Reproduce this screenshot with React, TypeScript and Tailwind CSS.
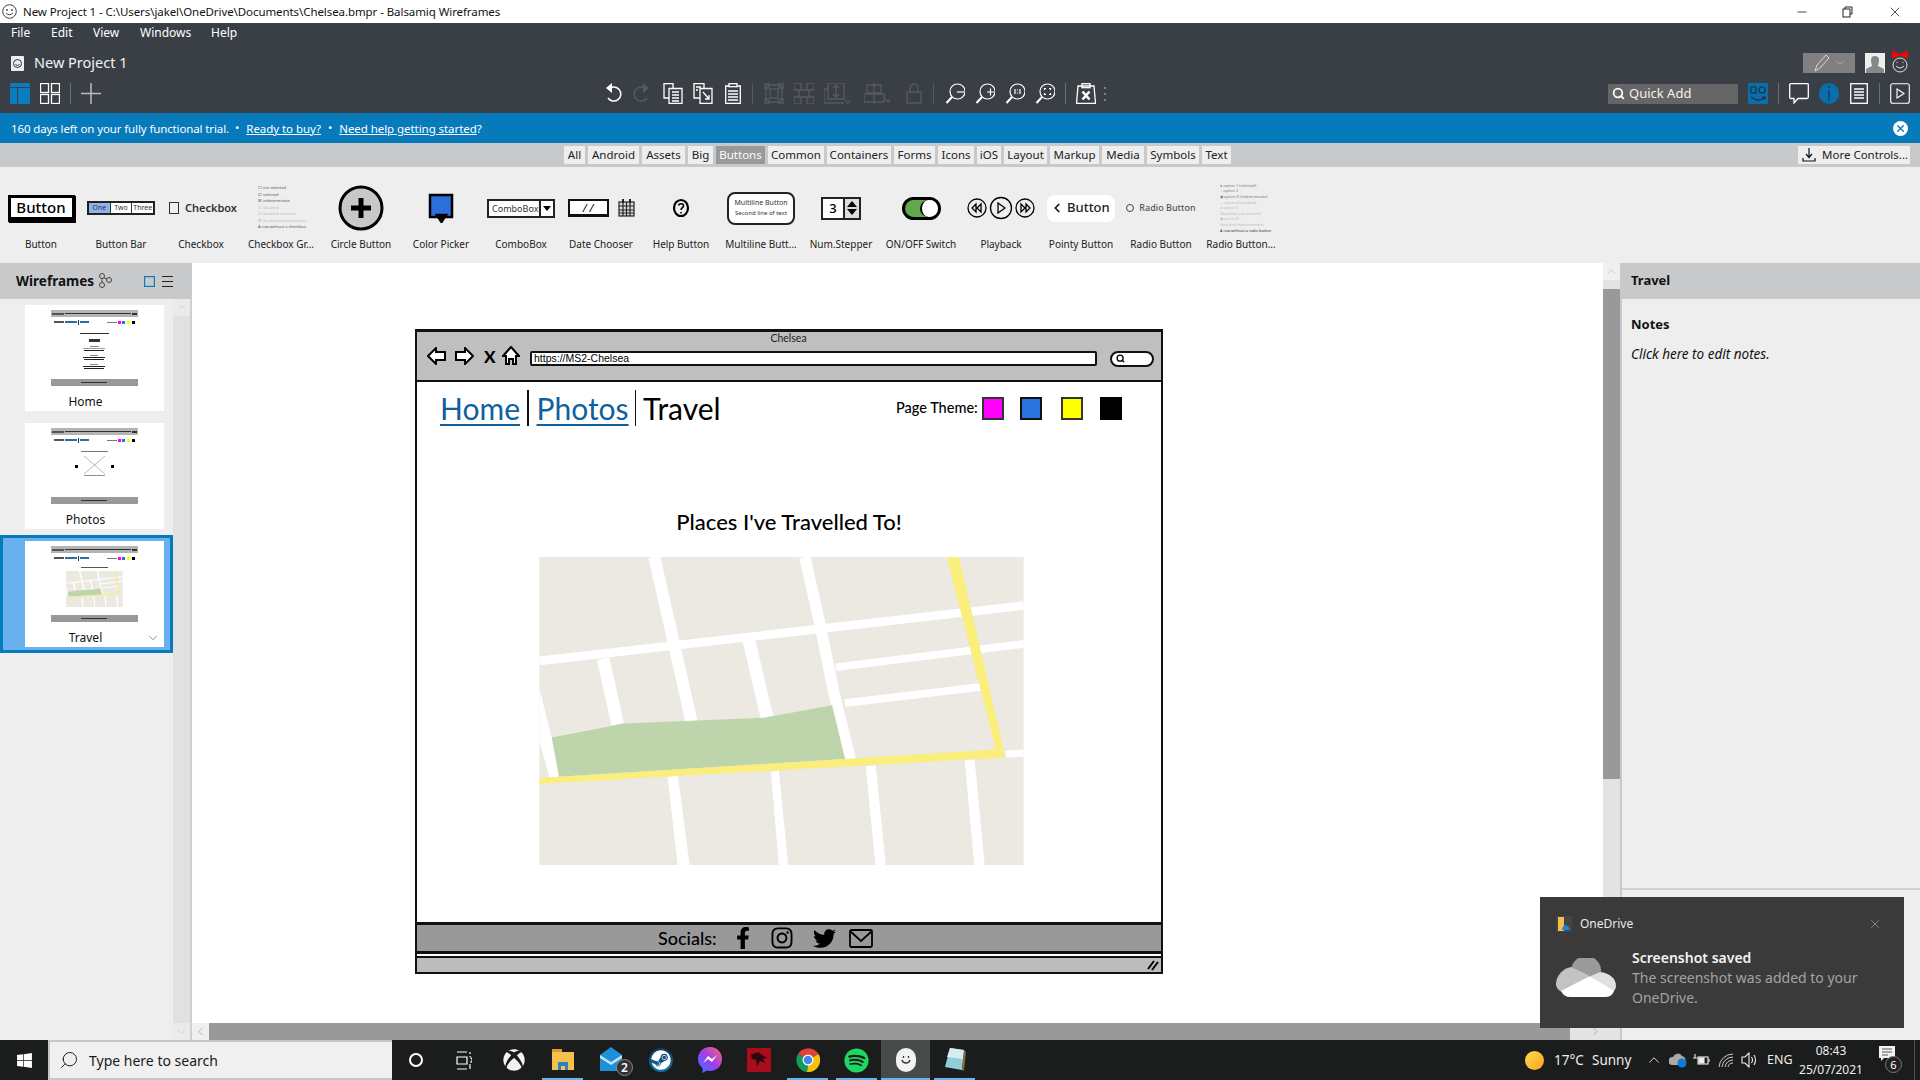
import React from "react";
import { FaWindows, FaXbox, FaSteam, FaSpotify, FaTwitter, FaFacebookF, FaInstagram } from "react-icons/fa";
import { Search, ChevronUp, ChevronDown, ChevronLeft, ChevronRight, X, Minus } from "lucide-react";

const ui = "font-['Noto_Sans','Open_Sans',sans-serif]";
const sk = "font-['Lato','Liberation_Sans',sans-serif]";

function S({ w, h = 21, sw = 1.3, c = "#fff", cls = "", children }: { w: number; h?: number; sw?: number; c?: string; cls?: string; children: React.ReactNode }) {
  return (
    <svg width={w} height={h} viewBox={`0 0 ${w} ${h}`} fill="none" stroke={c} strokeWidth={sw} className={"shrink-0 block " + cls}>
      {children}
    </svg>
  );
}

function MapSvg({ w, h }: { w: number; h: number }) {
  return (
    <svg width={w} height={h} viewBox="58 50 1454 925" className="block">
      <rect x="58" y="50" width="1454" height="925" fill="#ebe9e1" />
      <g stroke="#fff" fill="none">
        <path d="M403 50L515 545" strokeWidth="36" />
        <path d="M855 50L900 250L945 470L992 660" strokeWidth="34" />
        <path d="M58 362L1512 196" strokeWidth="26" />
        <path d="M948 381L1512 311" strokeWidth="23" />
        <path d="M975 489L1400 438" strokeWidth="23" />
        <path d="M249 355L293 552" strokeWidth="38" />
        <path d="M687 300L741 530" strokeWidth="38" />
      </g>
      <g fill="#fff">
        <path d="M58 445L95 592L117 712L88 712L58 605Z" />
        <path d="M443 710L474 708L509 975L473 975Z" />
        <path d="M753 695L777 692L805 975L777 975Z" />
        <path d="M1038 678L1068 676L1098 975L1067 975Z" />
        <path d="M1335 660L1365 658L1395 975L1364 975Z" />
        <path d="M1458 632L1512 628L1512 650L1458 652Z" />
      </g>
      <path d="M95 592L313 550L733 533L937 495L976 657L117 710Z" fill="#bed5ac" />
      <path d="M1282 50L1318 50L1458 652L58 731L58 714L1428 628Z" fill="#faee7c" />
    </svg>
  );
}

function Mini({ kind }: { kind: "home" | "photos" | "travel" }) {
  return (
    <div className="w-[87px] h-[76px] flex flex-col">
      <div className="h-[7px] bg-[#b4b4b4] flex items-center px-[1px] gap-[1px]">
        <div className="w-[12px] h-[2px] bg-[#555]" />
        <div className="flex-1 h-[1px] bg-[#333]" />
        <div className="w-[5px] h-[2px] bg-[#333]" />
      </div>
      <div className="h-[8px] flex items-center mt-[1px] px-[3px]">
        <div className="w-[10px] h-[2px] bg-[#555]" />
        <div className="w-[12px] h-[2px] bg-[#2a6ea8] ml-[1px]" />
        <div className="w-[1px] h-[5px] bg-[#333] ml-[1px]" />
        <div className="w-[9px] h-[2px] bg-[#2a6ea8] ml-[1px]" />
        <div className="w-[10px] h-[1px] bg-[#777] ml-[18px]" />
        <div className="w-[3px] h-[3px] bg-[#f0f] ml-[1px]" />
        <div className="w-[3px] h-[3px] bg-[#2a6fdb] ml-[1px]" />
        <div className="w-[3px] h-[3px] bg-[#ff0] ml-[2px]" />
        <div className="w-[3px] h-[3px] bg-black ml-[2px]" />
      </div>
      <div className="flex-1 flex flex-col items-center min-h-0">
        {kind === "home" && (
          <>
            <div className="w-[29px] h-[1px] bg-[#333] mt-[7px]" />
            <div className="w-[11px] h-[3px] bg-[#333] mt-[5px]" />
            <div className="w-[9px] h-[1px] bg-[#888] mt-[4px]" />
            <div className="w-[22px] h-[1px] bg-[#999] mt-[1px]" />
            <div className="w-[20px] h-[1px] bg-[#222] mt-[1px]" />
            <div className="w-[8px] h-[1px] bg-[#888] mt-[4px]" />
            <div className="w-[22px] h-[1px] bg-[#222] mt-[1px]" />
            <div className="w-[20px] h-[1px] bg-[#222] mt-[1px]" />
            <div className="w-[8px] h-[1px] bg-[#888] mt-[4px]" />
            <div className="w-[22px] h-[1px] bg-[#222] mt-[1px]" />
            <div className="w-[20px] h-[1px] bg-[#222] mt-[1px]" />
          </>
        )}
        {kind === "photos" && (
          <>
            <div className="w-[27px] h-[1px] bg-[#777] mt-[7px]" />
            <div className="flex items-center gap-[3px] mt-[4px] h-[20px]">
              <div className="w-[3px] h-[3px] bg-black" />
              <svg width="21" height="20" viewBox="0 0 21 20" stroke="#888" strokeWidth="0.6" className="block mx-[3px]">
                <path d="M0 0L21 18M21 0L0 18" />
                <path d="M0 19.5H21" stroke="#444" />
              </svg>
              <div className="w-[3px] h-[3px] bg-black" />
            </div>
          </>
        )}
        {kind === "travel" && (
          <>
            <div className="w-[27px] h-[1px] bg-[#555] mt-[5px]" />
            <div className="mt-[3px]">
              <MapSvg w={57} h={36} />
            </div>
          </>
        )}
      </div>
      <div className="h-[7px] bg-[#999] flex items-center justify-center">
        <div className="w-[26px] h-[1px] bg-[#333]" />
      </div>
    </div>
  );
}

function ThumbCard({ kind, label, selected }: { kind: "home" | "photos" | "travel"; label: string; selected?: boolean }) {
  const card = (
    <div className="w-[139px] h-[106px] bg-white flex flex-col items-center relative">
      <div className="mt-[5px] ml-[-1px]"><Mini kind={kind} /></div>
      <div className="text-[12px] text-[#111] leading-[16px] mt-[8px] mr-[18px]">{label}</div>
      {selected && <ChevronDown size={14} strokeWidth={1} color="#444" className="absolute right-[4px] bottom-[2px]" />}
    </div>
  );
  if (selected) {
    return (
      <div className="w-[173px] h-[118px] border-[3px] border-[#067abb] bg-[#68b0ee] pl-[22px] pt-[3px]">
        {card}
      </div>
    );
  }
  return <div className="pl-[25px] mb-[12px]">{card}</div>;
}

function Library() {
  const items: [string, React.ReactNode][] = [
    ["Button", <div className="w-[67px] h-[27px] bg-white border-[3px] border-black border-b-[5px] shadow-[1px_1px_0_#000] flex items-center justify-center text-[15px] font-medium text-black" key="a">Button</div>],
    ["Button Bar", <div className="w-[68px] h-[14px] border-2 border-[#222] flex text-[7px] text-[#333] leading-[10px] text-center" key="a"><div className="flex-1 bg-[#8db3ee]">One</div><div className="flex-1 bg-white border-l border-[#333]">Two</div><div className="flex-1 bg-white border-l border-[#333]">Three</div></div>],
    ["Checkbox", <div className="flex items-center gap-[6px] ml-[4px]" key="a"><div className="w-[10px] h-[12px] border border-[#333]" /><span className="text-[11px] text-[#333] font-semibold">Checkbox</span></div>],
    ["Checkbox Gr...", <div className="flex flex-col text-[4px] leading-[6.6px] text-[#555] w-[54px] whitespace-nowrap ml-[8px]" key="a">
      <span>☐ not selected</span><span>☑ selected</span><span>☒ indeterminate</span><span className="text-[#bbb]">☐ disabled</span><span className="text-[#bbb]">☑ disabled selected</span><span className="text-[#bbb]">☒ disabled indeterminate</span><span>A row without a checkbox</span></div>],
    ["Circle Button", <S key="a" w={46} h={46} c="#000" sw={3}><circle cx="23" cy="23" r="21" fill="#c8c8c8" /><path d="M23 13V33M13 23H33" strokeWidth="5" /></S>],
    ["Color Picker", <S key="a" w={26} h={30} c="#000" sw={2.5}><rect x="2" y="2" width="22" height="22" fill="#2a6fdb" /><path d="M9 22H18L13.5 29Z" fill="#000" /></S>],
    ["ComboBox", <div key="a" className="w-[68px] h-[19px] border-2 border-[#222] bg-white flex items-center text-[9px] text-[#333] leading-none"><div className="flex-1 pl-[3px] border-r-2 border-[#222] h-full flex items-center">ComboBox</div><div className="w-[12px] flex justify-center"><div className="w-0 h-0 border-x-[4px] border-x-transparent border-t-[5px] border-t-black" /></div></div>],
    ["Date Chooser", <div key="a" className="flex items-center gap-[9px]"><div className="w-[41px] h-[18px] border-2 border-b-[3px] border-[#111] bg-white text-[11px] flex items-center justify-center text-black italic leading-none">/ /</div><S w={17} h={18} c="#222" sw={1.2}><rect x="1" y="3" width="15" height="14" fill="#ddd" /><path d="M1 7H16M1 11H16M1 14H16M5 3V17M8.500 3V17M12 3V17" /><path d="M5 0V4M12 0V4" strokeWidth="2" /></S></div>],
    ["Help Button", <S key="a" w={18} h={20} c="#000" sw={2.2}><ellipse cx="9" cy="10" rx="7" ry="8" /><path d="M6.500 7.500C7 5 12 5 11.500 8C11 10 9 10 9 12M9 14V15.500" strokeWidth="1.600" /></S>],
    ["Multiline Butt...", <div key="a" className="w-[68px] h-[33px] border-2 border-[#222] rounded-[8px] bg-white flex flex-col items-center justify-center text-[7px] leading-[11px] text-[#333]"><span>Multiline Button</span><span className="text-[6px]">Second line of text</span></div>],
    ["Num.Stepper", <div key="a" className="w-[40px] h-[23px] border-2 border-[#222] bg-white flex items-center text-[13px] text-black font-medium"><div className="flex-1 text-center leading-none">3</div><div className="w-[16px] h-full bg-[#ddd] border-l-2 border-[#222] flex flex-col items-center justify-center gap-[2px]"><div className="w-0 h-0 border-x-[5px] border-x-transparent border-b-[6px] border-b-black" /><div className="w-0 h-0 border-x-[5px] border-x-transparent border-t-[6px] border-t-black" /></div></div>],
    ["ON/OFF Switch", <div key="a" className="w-[39px] h-[23px] rounded-full border-[3px] border-black bg-[#62a84e] flex justify-end"><div className="w-[18px] h-full rounded-full bg-white border-l-2 border-black" /></div>],
    ["Playback", <S key="a" w={68} h={26} c="#000" sw={1.300}><circle cx="10" cy="13" r="9" /><circle cx="34" cy="13" r="10.500" /><circle cx="58" cy="13" r="9" /><path d="M9 9L5 13L9 17ZM14 9L10 13L14 17Z" /><path d="M31 8L38 13L31 18Z" /><path d="M54 9L58 13L54 17ZM59 9L63 13L59 17Z" /></S>],
    ["Pointy Button", <div key="a" className="w-[68px] h-[27px] rounded-[8px] bg-white flex items-center text-[13px] text-[#222] font-medium pl-[3px]"><ChevronLeft size={14} strokeWidth={3} color="#111" /><span className="ml-[3px]">Button</span></div>],
    ["Radio Button", <div key="a" className="flex items-center gap-[5px] text-[9px] font-medium text-[#555] whitespace-nowrap"><div className="w-[8px] h-[8px] rounded-full border border-[#444]" /><span>Radio Button</span></div>],
    ["Radio Button...", <div key="a" className="flex flex-col text-[3.8px] leading-[5.6px] text-[#777] w-[54px] whitespace-nowrap ml-[12px]"><span>● option 1 (selected)</span><span>○ option 2</span><span>◉ option 3 (indeterminate)</span><span className="text-[#bbb]">○ option 4 (disabled)</span><span className="text-[#bbb]">● option 5</span><span className="text-[#bbb]">(disabled and selected)</span><span className="text-[#bbb]">◉ option 6</span><span className="text-[#bbb]">(disabled indeterminate)</span><span className="text-[#333]">A row without a radio button</span></div>],
  ];
  return (
    <div className="h-[96px] bg-[#eeeeee] flex pl-[1px] shrink-0">
      {items.map(([label, node]) => (
        <div key={label} className="w-[80px] flex flex-col items-center shrink-0">
          <div className="h-[48px] mt-[17px] flex items-center justify-center w-full overflow-visible">{node}</div>
          <div className="mt-[5px] text-[10px] leading-[14px] text-[#222] whitespace-nowrap">{label}</div>
        </div>
      ))}
    </div>
  );
}

const tabs: [string, number][] = [["All", 21], ["Android", 51], ["Assets", 43], ["Big", 25], ["Buttons", 49], ["Common", 56], ["Containers", 64], ["Forms", 41], ["Icons", 36], ["iOS", 24], ["Layout", 43], ["Markup", 49], ["Media", 42], ["Symbols", 52], ["Text", 29]];

function Toolbar() {
  const dim = "#565b61";
  return (
    <div className="h-[21px] mt-[10px] flex items-center pl-[10px]">
      <S w={20} c="#0a7cc0" sw={0}><rect x="0" y="0" width="20" height="4" fill="#0a7cc0" /><rect x="0" y="5" width="7" height="16" fill="#0a7cc0" /><rect x="8" y="5" width="12" height="16" fill="#0a7cc0" /></S>
      <S w={20} cls="ml-[10px]"><rect x=".5" y=".5" width="8" height="9" /><rect x="11.500" y=".5" width="8" height="9" /><rect x=".5" y="11.500" width="8" height="9" /><rect x="11.500" y="11.500" width="8" height="9" /></S>
      <div className="w-px h-[21px] bg-[#6a6f75] ml-[10px]" />
      <S w={20} c="#b9bcc0" sw={1.500} cls="ml-[10px]"><path d="M10 0V21M0 10.500H20" /></S>
      <S w={18} sw={1.500} cls="ml-[503px]"><path d="M5 6A7 7 0 1 1 4 15" /><path d="M8 0V10L2 5Z" fill="#fff" stroke="none" /></S>
      <S w={18} c={dim} sw={1.500} cls="ml-[11px]"><path d="M13 6A7 7 0 1 0 14 15" /><path d="M10 0V10L16 5Z" fill={dim} stroke="none" /></S>
      <S w={20} cls="ml-[12px]"><path d="M1 .5H10V15H1Z" /><path d="M6 5.500H19V20.500H6Z" fill="#3a3f45" /><path d="M9 9H16M9 12H16M9 15H16M9 18H16" /></S>
      <S w={20} cls="ml-[10px]"><path d="M1 .5H11V15H1Z" /><path d="M7 5.500H19V20.500H7Z" fill="#3a3f45" /><path d="M10 9L16 16M16 12V16H12M3 4H8M3 7H5" /></S>
      <S w={16} cls="ml-[12px]"><path d="M.7 3H15.300V20.500H.7Z" /><rect x="4" y=".7" width="8" height="3" fill="#3a3f45" /><path d="M3 8H13M3 11H13M3 14H13M3 17H13" /></S>
      <div className="w-px h-[21px] bg-[#55595f] ml-[11px]" />
      <S w={20} c={dim} cls="ml-[11px]"><path d="M2 2H18V19H2Z M0 0H5V5H0ZM15 0H20V5H15ZM0 16H5V21H0ZM15 16H20V21H15ZM6 6H14V15H6Z" /></S>
      <S w={20} c={dim} cls="ml-[10px]"><path d="M0 0H7V7H0ZM13 0H20V7H13ZM0 14H7V21H0ZM13 14H20V21H13ZM5 7H15V14H5Z" /></S>
      <S w={26} c={dim} cls="ml-[10px]"><path d="M0 6H4M0 6V20H20M4 0H20V16H4ZM12 3V13M9 5L12 2L15 5M9 11L12 14L15 11M21 17L24 20L26 17" /></S>
      <S w={26} c={dim} cls="ml-[14px]"><path d="M3 2H17V10H3ZM0 11H20V19H0ZM10 0V21M21 16L24 19L26 16" /></S>
      <S w={16} c={dim} cls="ml-[16px]"><path d="M1 9H15V20H1ZM4 9V5A4 4 0 0 1 12 5V9" /></S>
      <div className="w-px h-[21px] bg-[#55595f] ml-[11px]" />
      {["M12 9H19", "M12 9H19M15.500 5.500V12.500", "", ""].map((d, i) => (
        <S key={i} w={20} cls={i === 0 ? "ml-[11px]" : "ml-[10px]"} sw={1.200}>
          <circle cx="12.500" cy="8.500" r="7.500" />
          <path d="M7 14L1.500 20" strokeWidth="2" />
          {d && <path d={d} />}
          {i === 2 && <path d="M10 6V11M15 6V11M12.500 6.500V7.500M12.500 9.500V10.500" />}
          {i === 3 && <path d="M9.500 7V5.500H11M15.500 7V5.500H14M9.500 10V11.500H11M15.500 10V11.500H14" />}
        </S>
      ))}
      <div className="w-px h-[21px] bg-[#6a6f75] ml-[10px]" />
      <S w={20} cls="ml-[10px]"><path d="M2 3H18L19.500 20.500H.5Z" /><rect x="6" y=".7" width="8" height="4" /><path d="M6.500 8.500L13.500 16.500M13.500 8.500L6.500 16.500" strokeWidth="2.600" /></S>
      <div className="flex flex-col gap-[4px] ml-[8px]"><div className="w-[2px] h-[2px] bg-[#7d8187]" /><div className="w-[2px] h-[2px] bg-[#7d8187]" /><div className="w-[2px] h-[2px] bg-[#7d8187]" /></div>
      <div className="ml-[502px] w-[130px] h-[20px] bg-[#666666] flex items-center pl-[4px] text-[#f2f2f2] text-[13px]">
        <Search size={13} strokeWidth={3.2} color="#fff" />
        <span className="ml-[4px]">Quick Add</span>
      </div>
      <div className="ml-[10px] w-[20px] h-[21px] bg-[#0a6eaa]">
        <S w={20} c="#1d2e3d" sw={1.100}><rect x="3" y="4" width="5" height="6" /><circle cx="14" cy="7" r="3" /><path d="M3 14C8 18 13 18 17 14M14 14H17V17" /></S>
      </div>
      <div className="w-px h-[21px] bg-[#6a6f75] ml-[10px]" />
      <S w={20} cls="ml-[10px]"><path d="M1.500 .7H18.500Q19.300 .7 19.300 1.500V14Q19.300 15.500 18 15.500H9L5 20V15.500H2Q.7 15.500 .7 14V1.500Z" /></S>
      <div className="ml-[10px] w-[20px] h-[21px] rounded-full bg-[#0a6eaa] flex items-center justify-center">
        <S w={4} h={15} c="#14334c" sw={1.200}><path d="M2 0V2M2 4.500V15" /></S>
      </div>
      <S w={18} cls="ml-[11px]" sw={1.300}><rect x=".7" y=".7" width="16.600" height="19.600" /><path d="M4 6H14M4 9H14M4 12H14M4 15H14" /></S>
      <div className="w-px h-[21px] bg-[#6a6f75] ml-[11px]" />
      <S w={20} cls="ml-[10px]" sw={1.100}><rect x=".7" y=".7" width="18.600" height="19.600" rx="2" /><path d="M7 6L14 10.500L7 15Z" /></S>
    </div>
  );
}

function Wireframe() {
  const Swatch = ({ cls }: { cls: string }) => <div className={"w-[22px] h-[23px] border-2 " + cls} />;
  return (
    <div className={"ml-[223px] mt-[66px] w-[748px] h-[645px] border-2 border-t-[3px] border-[#111] bg-white flex flex-col " + sk}>
      <div className="h-[50px] bg-[#bfbfbf] border-b-[2px] border-[#111] flex flex-col shrink-0">
        <div className="text-center text-[10.5px] leading-[12px] text-[#222] pr-[1px]">Chelsea</div>
        <div className="flex items-center h-[20px] mt-[2px] pl-[10px]">
          <S w={20} h={18} c="#000" sw={2}><path d="M1 9L9 1V5H18V13H9V17Z" fill="#fff" /></S>
          <S w={20} h={18} c="#000" sw={2} cls="ml-[7px]"><path d="M19 9L11 1V5H2V13H11V17Z" fill="#fff" /></S>
          <span className="ml-[10px] w-[12px] text-[17px] font-black leading-none text-black">X</span>
          <S w={18} h={20} c="#000" sw={2} cls="ml-[6px]"><path d="M9 1L17 10H14V18H11V13H7V18H4V10H1Z" fill="#fff" /></S>
          <div className="ml-[10px] w-[567px] h-[15px] bg-white border-2 border-[#111] rounded-[2px] text-[10.5px] leading-[11px] text-black pl-[2px] font-['Liberation_Sans',sans-serif] mt-[5px]">https://MS2-Chelsea</div>
          <div className="ml-[13px] w-[44px] h-[16px] bg-white border-2 border-[#111] rounded-full flex items-center pl-[4px] mt-[5px]">
            <Search size={9} strokeWidth={3.500} color="#000" />
          </div>
        </div>
      </div>
      <div className="h-[52px] flex items-center pl-[23px] text-[30px] shrink-0 leading-none">
        <span className="text-[#10609d] underline decoration-[2px] underline-offset-[4px] w-[80px]">Home</span>
        <div className="w-[1.500px] h-[36px] bg-[#111] ml-[7px]" />
        <span className="text-[#10609d] underline decoration-[2px] underline-offset-[4px] ml-[8px] w-[92px]">Photos</span>
        <div className="w-[1.500px] h-[36px] bg-[#111] ml-[6px]" />
        <span className="text-black ml-[7px] w-[81px]">Travel</span>
        <span className="text-[14.5px] text-black ml-[172px] w-[80px] whitespace-nowrap font-medium">Page Theme:</span>
        <div className="ml-[6px]"><Swatch cls="bg-[#f0f] border-[#333]" /></div>
        <div className="ml-[16px]"><Swatch cls="bg-[#2a74e0] border-[#111]" /></div>
        <div className="ml-[19px]"><Swatch cls="bg-[#ff0] border-[#333]" /></div>
        <div className="ml-[17px]"><Swatch cls="bg-black border-black" /></div>
      </div>
      <div className="text-center text-[22px] leading-[26px] text-black mt-[75px] font-medium shrink-0">Places I've Travelled To!</div>
      <div className="mt-[22px] ml-[122px] shrink-0"><MapSvg w={485} h={308} /></div>
      <div className="mt-[57px] h-[32px] bg-[#999999] border-y-[3px] border-[#111] flex items-center pl-[241px] shrink-0">
        <span className="text-[18px] text-black font-medium w-[62px] whitespace-nowrap">Socials:</span>
        <FaFacebookF size={22} color="#000" className="ml-[12px]" />
        <FaInstagram size={24} color="#000" className="ml-[16px]" />
        <FaTwitter size={23} color="#000" className="ml-[19px]" />
        <S w={24} h={19} c="#000" sw={1.800} cls="ml-[13px]"><rect x="1" y="1" width="22" height="17" rx="1.500" /><path d="M1 2L12 12L23 2" /></S>
      </div>
      <div className="mt-[2px] flex-1 bg-[#bcbcbc] border-t-2 border-[#111] flex items-center justify-end pr-[2px]">
        <S w={12} h={12} c="#000" sw={2}><path d="M1 10L7 2M5 11L11 3" /></S>
      </div>
    </div>
  );
}

function Chrome() {
  return (
    <svg width="24" height="24" viewBox="0 0 24 24" className="block">
      <path d="M12 12L2 6A12 12 0 0 1 22.500 6Z" fill="#db4437" />
      <path d="M12 12L22.500 6A12 12 0 0 1 11 24Z" fill="#f4c20d" />
      <path d="M12 12L11 24A12 12 0 0 1 2 6Z" fill="#0f9d58" />
      <circle cx="12" cy="12" r="5.500" fill="#fff" />
      <circle cx="12" cy="12" r="4.300" fill="#4285f4" />
    </svg>
  );
}

function Taskbar() {
  const slot = "w-[49px] h-full flex items-center justify-center relative shrink-0";
  const under = "absolute left-[4px] right-[4px] bottom-0 h-[2px] bg-[#6cb4ec]";
  return (
    <div className={"h-[40px] bg-[#1b1c1c] flex items-center text-white shrink-0 " + ui}>
      <div className="w-[48px] flex justify-center"><FaWindows size={17} color="#fff" /></div>
      <div className="w-[344px] h-[40px] bg-[#f0f0f0] border-2 border-b-2 border-[#c6c6c6] border-r-0 flex items-center pl-[9px] text-[#1a1a1a] text-[14px]">
        <Search size={20} strokeWidth={1.200} color="#222" className="scale-x-[-1]" />
        <span className="ml-[10px]">Type here to search</span>
      </div>
      <div className="w-[48px] flex justify-center"><div className="w-[14px] h-[14px] rounded-full border-[2.500px] border-white" /></div>
      <div className="w-[48px] flex justify-center"><S w={16} h={19} sw={1.200}><path d="M1 1H11M1 6H11V13H1ZM1 18H11M14 1V3M14 5V6M14 7H16V11H14M14 13V18" /></S></div>
      <div className={slot + " ml-[1px]"}><FaXbox size={22} color="#f2f2f2" /></div>
      <div className={slot}>
        <S w={22} h={24} c="none"><path d="M0 1H10V4H22V22H0Z" fill="#f5c04e" /><path d="M0 1H10V4H0Z" fill="#d99c2b" /><path d="M6 22V14H16V22H13V18H9V22Z" fill="#2b7fc4" /></S>
        <div className={under} />
      </div>
      <div className={slot}>
        <S w={28} h={26} c="none"><path d="M2 8L13 0L24 8V24H2Z" fill="#1e8fd9" /><path d="M2 8L13 15L24 8L24 11L13 18L2 11Z" fill="#bfe3f8" /></S>
        <div className="absolute right-[3px] top-[19px] w-[17px] h-[17px] rounded-full bg-[#333] border border-[#888] text-[12px] leading-[15px] text-center font-semibold">2</div>
      </div>
      <div className={slot}><div className="w-[24px] h-[24px] rounded-full bg-gradient-to-b from-[#14365e] to-[#0b77a8] flex items-center justify-center"><FaSteam size={20} color="#fff" /></div></div>
      <div className={slot}>
        <svg width="24" height="27" viewBox="0 0 24 27" className="block"><defs><linearGradient id="msg" x1="0" y1="1" x2="1" y2="0"><stop offset="0" stopColor="#2a7bff" /><stop offset=".5" stopColor="#a33bf0" /><stop offset="1" stopColor="#ff6a68" /></linearGradient></defs><path d="M12 0C5 0 0 5 0 12C0 16 2 19 4.500 21V26L9 23.500C10 24 11 24 12 24C19 24 24 19 24 12C24 5 19 0 12 0Z" fill="url(#msg)" /><path d="M5 16L10 9L14 12L19 8L14 15L10 12Z" fill="#fff" /></svg>
      </div>
      <div className={slot}><div className="w-[24px] h-[24px] bg-[#a90d1b] flex items-center justify-center"><S w={18} h={18} c="none"><path d="M1 4L8 1L12 4L17 7L13 8L15 12L10 10L7 15L6 9L2 8Z" fill="#2b0a0d" /></S></div></div>
      <div className={slot}><Chrome /><div className={under} /></div>
      <div className={slot}><FaSpotify size={25} color="#1ed760" /><div className={under} /></div>
      <div className={slot + " bg-[#474a4a]"}>
        <div className="w-[20px] h-[24px] rounded-full bg-[#f2f2f2] flex items-center justify-center"><S w={14} h={14} c="#333" sw={1.300}><path d="M3 7C4 11 10 11 11 7" /><path d="M4.500 3V5M9.500 3V5" /></S></div>
        <div className="absolute left-0 right-0 bottom-0 h-[2px] bg-[#6cb4ec]" />
      </div>
      <div className={slot}>
        <S w={22} h={26} c="none"><path d="M6 1L20 3L18 23L1 20Z" fill="#8fd0d8" /><path d="M6 1L20 3L19 12L3 10Z" fill="#d6eef0" /><path d="M20 3L22 5L20 24L18 23Z" fill="#8a6a3a" /></S>
        <div className={under} />
      </div>
      <div className="ml-[546px] w-[19px] h-[19px] rounded-full bg-gradient-to-br from-[#ffd84d] to-[#fba51a] shrink-0" />
      <span className="ml-[10px] text-[13.5px] w-[38px] whitespace-nowrap text-[#eee]">17°C</span>
      <span className="text-[13.5px] w-[55px] text-[#eee]">Sunny</span>
      <ChevronUp size={18} strokeWidth={1.200} className="ml-[-2px]" color="#eee" />
      <S w={18} h={16} sw={1} cls="ml-[6px]" c="none"><path d="M3 13A4 4 0 0 1 4 5A5 5 0 0 1 13 4A4 4 0 0 1 16 10V13Z" fill="#aaa" /><circle cx="13" cy="11" r="4.500" fill="#0a7cd8" /></S>
      <S w={17} h={14} sw={1.100} cls="ml-[6px]" c="#eee"><rect x="5" y="4" width="10" height="7" /><rect x="6" y="5" width="5" height="5" fill="#eee" /><path d="M16 6V9M0 5H4M2 1V5" /></S>
      <S w={16} h={16} sw={1} cls="ml-[8px]" c="#ccc"><path d="M1 15A14 14 0 0 1 15 2M4 15A11 11 0 0 1 15 5M7 15A8 8 0 0 1 15 8M10 15A5 5 0 0 1 15 11" /></S>
      <S w={17} h={16} sw={1.100} cls="ml-[7px]" c="#eee"><path d="M1 5H4L8 1V15L4 11H1ZM10.500 5Q12.500 8 10.500 11M13 3Q16 8 13 13" /></S>
      <span className="ml-[9px] text-[12.5px] w-[24px] text-[#eee]">ENG</span>
      <div className="w-[80px] flex flex-col items-center text-[12px] leading-[19px] text-[#eee] whitespace-nowrap">
        <span>08:43</span>
        <span>25/07/2021</span>
      </div>
      <div className="ml-[8px] relative w-[24px] h-[28px] shrink-0">
        <S w={16} h={17} c="none"><path d="M0 0H16V12H5L2 15V12H0Z" fill="#f2f2f2" /><path d="M3 3H13M3 6H13M3 9H9" stroke="#555" strokeWidth="1" /></S>
        <div className="absolute left-[6px] top-[10px] w-[17px] h-[17px] rounded-full bg-[#222] border border-[#777] text-[11px] leading-[15px] text-center">6</div>
      </div>
      <div className="ml-[11px] w-px h-full bg-[#555]" />
    </div>
  );
}

export default function App() {
  return (
    <div className={"w-[1920px] h-[1080px] relative overflow-hidden flex flex-col bg-white text-black " + ui}>
      {/* title bar */}
      <div className="h-[23px] flex items-center pl-[2px] shrink-0 text-[11.5px] text-[#111] bg-white">
        <S w={15} h={15} c="#444" sw={1}><circle cx="7.500" cy="7.500" r="6.800" /><circle cx="5" cy="6" r=".6" /><circle cx="10" cy="6" r=".6" /><path d="M4 9Q7.500 12.500 11 9" /></S>
        <span className="ml-[6px] whitespace-nowrap tracking-[-0.08px]">New Project 1 - C:\Users\jakel\OneDrive\Documents\Chelsea.bmpr - Balsamiq Wireframes</span>
        <div className="ml-auto flex items-center pr-[17px]">
          <Minus size={14} strokeWidth={1.300} color="#111" />
          <S w={12} h={12} c="#222" sw={1} cls="ml-[33px]"><rect x="1" y="3" width="7" height="8" /><path d="M3 3V1H10V8H8" /></S>
          <X size={16} strokeWidth={1.100} color="#111" className="ml-[33px]" />
        </div>
      </div>
      {/* dark header */}
      <div className="h-[90px] bg-[#3a3f45] shrink-0 flex flex-col text-white">
        <div className="h-[20px] flex items-center pl-[11px] text-[12px]">
          <span className="w-[40px]">File</span>
          <span className="w-[42px]">Edit</span>
          <span className="w-[47px]">View</span>
          <span className="w-[71px]">Windows</span>
          <span>Help</span>
        </div>
        <div className="h-[20px] mt-[10px] flex items-center pl-[11px] pr-[11px]">
          <div className="w-[13px] h-[15px] bg-[#eee] rounded-[1px] flex items-center justify-center"><S w={9} h={9} c="#333" sw={1}><circle cx="4.500" cy="4.500" r="4" /><path d="M2.500 5.500Q4.500 7.500 6.500 5.500" /></S></div>
          <span className="ml-[10px] text-[14.5px] text-[#f2f2f2]">New Project 1</span>
          <div className="ml-auto w-[52px] h-[20px] bg-[#808080] flex items-center pl-[11px] gap-[4px]">
            <S w={16} h={18} c="#d8d8d8" sw={1}><path d="M1 17L3 11L12 1L15 4L6 14Z" /></S>
            <ChevronDown size={12} strokeWidth={1} color="#ddd" />
          </div>
          <div className="ml-[10px] w-[20px] h-[20px] bg-[#eee] overflow-hidden">
            <S w={20} h={20} c="none"><path d="M6 7A4 4 0 0 1 14 7C14 10 13 12 13 13L19 16V20H1V16L7 13C7 12 6 10 6 7Z" fill="#888" /></S>
          </div>
          <S w={18} h={24} c="#ddd" sw={1} cls="ml-[6px] mt-[-3px]"><path d="M9 5L2 1V8ZM9 5L16 1V8Z" fill="#ff0000" stroke="#ff0000" /><circle cx="9" cy="15" r="7" /><path d="M5 16Q9 20 13 16M6 12V13M12 12V13" /></S>
        </div>
        <Toolbar />
      </div>
      {/* trial bar */}
      <div className="h-[30px] bg-[#067abb] shrink-0 flex items-center pl-[11px] pr-[12px] text-white text-[11.5px]">
        <span className="whitespace-nowrap tracking-[-0.12px] mt-[1px]">160 days left on your fully functional trial.</span>
        <span className="ml-[6px]">•</span>
        <span className="ml-[7px] underline whitespace-nowrap tracking-[-0.06px] mt-[1px]">Ready to buy?</span>
        <span className="ml-[7px]">•</span>
        <span className="ml-[7px] whitespace-nowrap tracking-[-0.06px] mt-[1px]"><span className="underline">Need help getting started</span>?</span>
        <div className="ml-auto w-[15px] h-[15px] rounded-full bg-white flex items-center justify-center">
          <X size={11} strokeWidth={3} color="#067abb" />
        </div>
      </div>
      {/* tabs */}
      <div className="h-[24px] bg-[#c8c9cb] shrink-0 flex items-center pl-[564px] pr-[10px] text-[11.5px] text-[#222]">
        {tabs.map(([t, w]) => (
          <div key={t} className={"h-[18px] mr-[3px] flex items-center justify-center shrink-0 whitespace-nowrap " + (t === "Buttons" ? "bg-[#999999] text-white" : "bg-[#eeeeee]")} style={{ width: w }}>{t}</div>
        ))}
        <div className="ml-auto w-[112px] h-[18px] bg-[#eeeeee] flex items-center pl-[4px] whitespace-nowrap">
          <S w={14} h={14} c="#111" sw={1.200}><path d="M7 0V9M4 6L7 9.500L10 6M1 10V13H13V10" /></S>
          <span className="ml-[6px]">More Controls...</span>
        </div>
      </div>
      <Library />
      {/* body */}
      <div className="flex-1 flex min-h-0">
        {/* left */}
        <div className="w-[192px] bg-[#eeeeee] flex flex-col shrink-0 border-r-2 border-[#cfd0d1]">
          <div className="h-[36px] bg-[#c8c9cb] flex items-center pl-[16px] shrink-0 w-[192px]">
            <span className="text-[13.5px] font-bold text-[#111]">Wireframes</span>
            <S w={16} h={16} c="#444" sw={1} cls="ml-[4px]"><circle cx="4" cy="3" r="2.500" /><circle cx="4" cy="12" r="2.500" /><circle cx="11" cy="7" r="2.500" /><path d="M4 5.500V9.500M6 5L9 6" /></S>
            <S w={11} h={11} c="#0a7cc0" sw={1.200} cls="ml-[30px]"><rect x=".6" y=".6" width="9.800" height="9.800" /></S>
            <S w={11} h={11} c="#222" sw={1} cls="ml-[7px]"><path d="M0 .5H11M0 5.500H11M0 10.500H11" /></S>
          </div>
          <div className="flex-1 flex min-h-0">
            <div className="w-[173px] pt-[6px]">
              <ThumbCard kind="home" label="Home" />
              <ThumbCard kind="photos" label="Photos" />
              <div className="mt-[-6px]"><ThumbCard kind="travel" label="Travel" selected /></div>
            </div>
            <div className="w-[17px] bg-[#e1e1e1] flex flex-col justify-between">
              <div className="h-[17px] bg-[#ebebeb] flex items-center justify-center"><ChevronUp size={13} strokeWidth={1} color="#bbb" /></div>
              <div className="h-[17px] bg-[#ebebeb] flex items-center justify-center"><ChevronDown size={13} strokeWidth={1} color="#bbb" /></div>
            </div>
          </div>
        </div>
        {/* center */}
        <div className="w-[1428px] flex flex-col shrink-0 min-h-0">
          <div className="flex-1 flex min-h-0">
            <div className="w-[1411px] bg-white min-h-0"><Wireframe /></div>
            <div className="w-[17px] flex flex-col bg-[#e3e3e3]">
              <div className="h-[17px] bg-[#f0f0f0] flex items-center justify-center"><ChevronUp size={13} strokeWidth={1} color="#aaa" /></div>
              <div className="h-[9px]" />
              <div className="h-[490px] bg-[#999999]" />
            </div>
          </div>
          <div className="h-[17px] bg-[#e3e3e3] flex shrink-0">
            <div className="w-[17px] bg-[#f0f0f0] flex items-center justify-center"><ChevronLeft size={13} strokeWidth={1} color="#777" /></div>
            <div className="w-[1361px] bg-[#999999]" />
            <div className="w-[50px] flex items-center justify-end pr-[18px]"><ChevronRight size={13} strokeWidth={1} color="#888" /></div>
          </div>
        </div>
        {/* right */}
        <div className="flex-1 flex flex-col bg-[#eeeeee] min-w-0">
          <div className="h-[36px] bg-[#c8c9cb] flex items-center pl-[11px] text-[13px] font-bold text-[#111] shrink-0">Travel</div>
          <div className="flex-1 border-l-2 border-[#c8c9cb] pl-[9px] flex flex-col">
            <div className="mt-[15px] text-[13px] font-bold text-[#111] leading-[20px]">Notes</div>
            <div className="mt-[10px] text-[13.5px] italic text-[#111] leading-[20px]">Click here to edit notes.</div>
            <div className="mt-[524px] h-[2px] bg-[#cfd0d1] -ml-[9px]" />
          </div>
        </div>
      </div>
      <Taskbar />
      {/* toast */}
      <div className={"absolute left-[1540px] top-[897px] w-[364px] h-[131px] bg-[#3a3a3a] text-white " + ui}>
        <div className="flex items-center pl-[16px] pt-[19px] h-[35px]">
          <div className="w-[16px] h-[16px] bg-[#454545] flex items-center justify-center">
            <S w={12} h={14} c="none"><path d="M0 0H6V14H0Z" fill="#f5c04e" /><path d="M4 13Q4 9 8 8Q11 9 12 13Z" fill="#1c86e0" /></S>
          </div>
          <span className="ml-[8px] text-[12px] text-[#eaeaea]">OneDrive</span>
          <X size={14} strokeWidth={1} color="#bbb" className="ml-[235px]" />
        </div>
        <div className="flex mt-[16px] pl-[16px]">
          <div className="mt-[10px]">
            <svg width="60" height="39" viewBox="0 0 60 39" className="block">
              <path d="M15 12A15 15 0 0 1 45 14L34 18Z" fill="#9a9a9a" />
              <path d="M0 26C0 17 8 10 15 9L34 18L8 35C3 33 0 30 0 26Z" fill="#c3c3c3" />
              <path d="M34 18L44 14C53 15 60 20 60 28C60 30 59 32 57 34Z" fill="#e0e0e0" />
              <path d="M5 33L34 18L58 33C57 36 54 39 50 39H14C10 39 7 37 5 33Z" fill="#fff" />
            </svg>
          </div>
          <div className="ml-[16px] w-[240px]">
            <div className="text-[14px] font-semibold leading-[20px] text-[#f2f2f2]">Screenshot saved</div>
            <div className="text-[14px] leading-[20px] text-[#a3a3a3]">The screenshot was added to your OneDrive.</div>
          </div>
        </div>
      </div>
    </div>
  );
}
